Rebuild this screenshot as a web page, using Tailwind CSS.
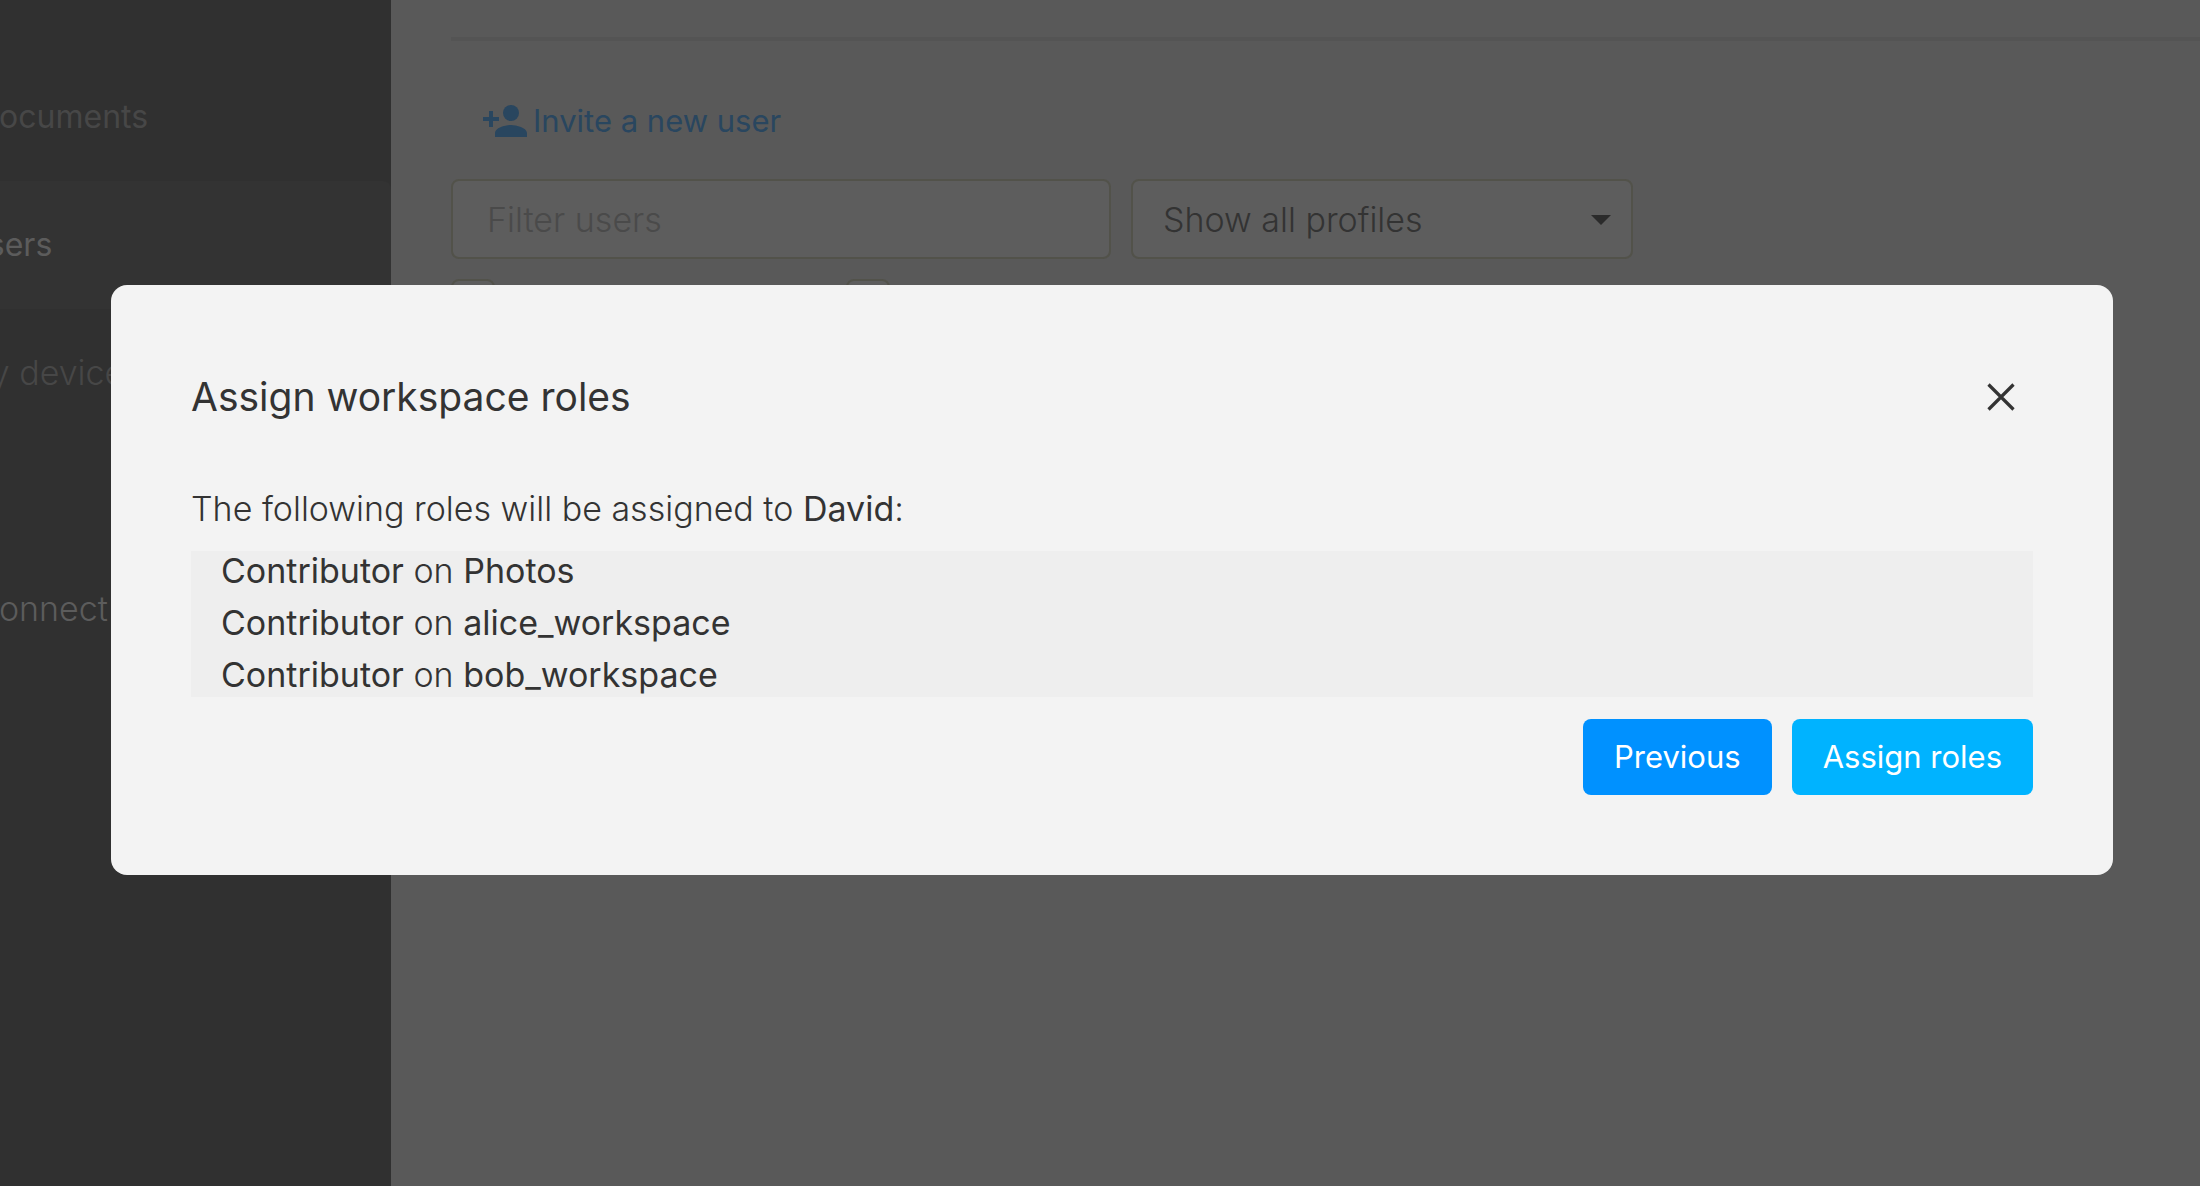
<!DOCTYPE html>
<html lang="en">
<head>
<meta charset="utf-8">
<title>Users</title>
<script src="https://cdn.jsdelivr.net/npm/@tailwindcss/browser@4"></script>
</head>
<body class="bg-[#595959] font-['Inter',sans-serif] text-[#333]">
<div class="flex h-screen overflow-hidden">
  <aside class="w-[391px] shrink-0 overflow-hidden bg-[#303030] text-[32px] leading-10 text-[#474747]">
    <nav class="pt-[53px]">
      <a href="#documents" class="flex h-32 items-center"><span class="-ml-6">Documents</span></a>
      <a href="#users" class="flex h-32 items-center rounded-r-lg bg-[#333] text-[#5c5c5c]"><span class="-ml-9">Users</span></a>
      <a href="#devices" class="flex h-32 items-center text-[34px] font-light"><span class="-ml-10 whitespace-nowrap">My devices</span></a>
    </nav>
    <button type="button" class="mt-[108px] flex h-32 w-full items-center text-[34px] font-light text-[#5c5c5c]"><span class="-ml-[70px]">Disconnect</span></button>
  </aside>

  <main class="min-w-0 flex-1 pl-15 pt-[37px]">
    <hr class="h-1 border-0 bg-[#545454]">
    <a href="#invite" class="ml-8 mt-[56px] flex w-fit items-center gap-1.5 text-[31px] leading-12 text-[#29465f]">
      <svg class="h-8 w-11" viewBox="0 0 44 32" fill="currentColor" aria-hidden="true">
        <circle cx="28" cy="8" r="8"/>
        <path d="M12 32v-4c0-5.300 10.700-8 16-8s16 2.700 16 8v4zM6 6h4v6h6v4h-6v6H6v-6H0v-4h6z"/>
      </svg>
      <span>Invite a new user</span>
    </a>
    <div class="mt-[34px] flex gap-5">
      <input type="text" aria-label="Filter users" placeholder="Filter users" class="h-20 w-[660px] rounded-lg border-2 border-[#52524a] bg-[#5d5d5d] px-[34px] text-[34px] font-light placeholder:text-[#4a4a4a]">
      <div class="relative h-20 w-[502px]">
        <select aria-label="Profiles" class="h-full w-full appearance-none rounded-lg border-2 border-[#52524a] bg-[#5d5d5d] pl-[30px] pr-16 text-[34px] font-light text-[#333]"><option>Show all profiles</option></select>
        <svg class="pointer-events-none absolute right-[22px] top-9 h-[10px] w-5" viewBox="0 0 20 10" fill="#2b2b2b" aria-hidden="true"><path d="M0 0h20L10 10z"/></svg>
      </div>
    </div>
    <div class="mt-5 flex gap-[351px]">
      <input type="checkbox" aria-label="Active users" class="h-11 w-11 appearance-none rounded-lg border-2 border-[#52524a] bg-[#5d5d5d]">
      <input type="checkbox" aria-label="Revoked users" class="h-11 w-11 appearance-none rounded-lg border-2 border-[#52524a] bg-[#5d5d5d]">
    </div>
  </main>
</div>

<div class="fixed inset-0 pl-[111px] pr-[87px] pt-[285px]">
  <section role="dialog" aria-modal="true" aria-labelledby="dialog-title" class="rounded-2xl bg-[#f3f3f3] p-20">
    <header class="flex h-16 items-center justify-between">
      <h1 id="dialog-title" class="text-[39px] leading-12">Assign workspace roles</h1>
      <button type="button" aria-label="Close" class="flex h-16 w-16 items-center justify-center">
        <svg class="h-7 w-7" viewBox="0 0 28 28" fill="none" stroke="#333" stroke-width="3.200" aria-hidden="true"><path d="M1.500 1.500l25 25M26.500 1.500l-25 25"/></svg>
      </button>
    </header>
    <p class="mt-[60px] text-[34px] font-light leading-10">The following roles will be assigned to <strong class="font-normal">David</strong>:</p>
    <ul class="mt-[22px] flex flex-col gap-3 bg-[#eee] pb-0.5 pl-[30px] text-[34px] font-light leading-10">
      <li><strong class="font-normal">Contributor</strong> on <strong class="font-normal">Photos</strong></li>
      <li><strong class="font-normal">Contributor</strong> on <strong class="font-normal">alice_workspace</strong></li>
      <li><strong class="font-normal">Contributor</strong> on <strong class="font-normal">bob_workspace</strong></li>
    </ul>
    <footer class="mt-[22px] flex justify-end gap-5 text-[31px] text-white">
      <button type="button" class="h-[76px] rounded-lg bg-[#0091ff] px-[31px]">Previous</button>
      <button type="button" class="h-[76px] rounded-lg bg-[#00b3ff] px-[31px]">Assign roles</button>
    </footer>
  </section>
</div>
</body>
</html>
